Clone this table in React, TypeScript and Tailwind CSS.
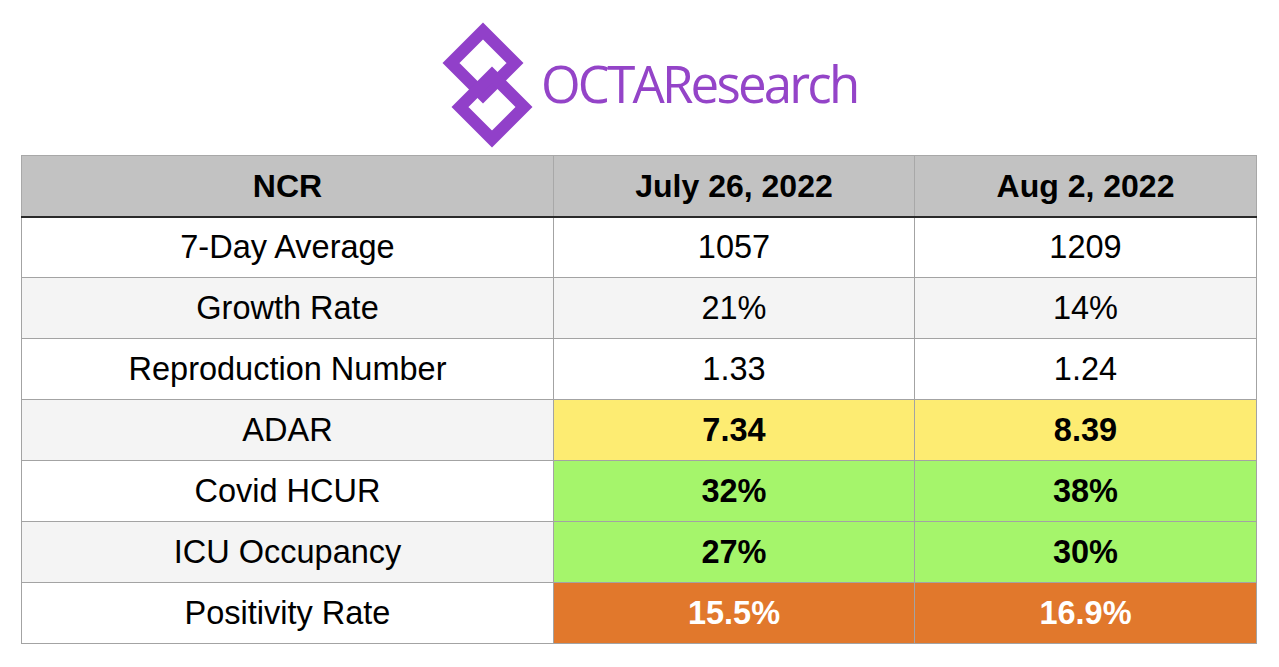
import React from "react";

interface Row {
  label: string;
  jul: string;
  aug: string;
  tone?: "yellow" | "green" | "orange";
}

const rows: Row[] = [
  { label: "7-Day Average", jul: "1057", aug: "1209" },
  { label: "Growth Rate", jul: "21%", aug: "14%" },
  { label: "Reproduction Number", jul: "1.33", aug: "1.24" },
  { label: "ADAR", jul: "7.34", aug: "8.39", tone: "yellow" },
  { label: "Covid HCUR", jul: "32%", aug: "38%", tone: "green" },
  { label: "ICU Occupancy", jul: "27%", aug: "30%", tone: "green" },
  { label: "Positivity Rate", jul: "15.5%", aug: "16.9%", tone: "orange" },
];

const toneClass = (tone?: Row["tone"]): string => {
  switch (tone) {
    case "yellow":
      return "bg-[#fdec72] font-bold text-black";
    case "green":
      return "bg-[#a5f56b] font-bold text-black";
    case "orange":
      return "bg-[#e1782c] font-bold text-white";
    default:
      return "";
  }
};

const Logo: React.FC = () => (
  <div className="flex items-start h-[155px] pl-[438px]">
    <svg
      width="96"
      height="132"
      viewBox="0 0 96 132"
      className="mt-[22px] shrink-0"
    >
      {/* upper diamond */}
      <path
        d="M45 9 L77 41 L45 73 L13 41 Z"
        fill="none"
        stroke="#9140c9"
        strokeWidth="12"
      />
      {/* lower diamond */}
      <path
        d="M54 53 L86 85 L54 117 L22 85 Z"
        fill="none"
        stroke="#9140c9"
        strokeWidth="12"
      />
    </svg>
    <span
      className="ml-[7px] mt-[53px] text-[51px] leading-[60px] font-normal tracking-[-2.8px] text-[#9444c8]"
      style={{ fontFamily: '"Open Sans", sans-serif' }}
    >
      OCTAResearch
    </span>
  </div>
);

const App: React.FC = () => {
  return (
    <div
      className="w-[1279px] h-[667px] bg-white overflow-hidden"
      style={{ fontFamily: '"Liberation Sans", Arial, sans-serif' }}
    >
      <Logo />
      <table className="ml-[21px] border-collapse table-fixed text-[32.5px] text-black">
        <colgroup>
          <col className="w-[532px]" />
          <col className="w-[361px]" />
          <col className="w-[342px]" />
        </colgroup>
        <thead>
          <tr className="h-[61px] bg-[#c2c2c2] text-[32px]">
            <th className="border border-[#a8a8a8] border-b-2 border-b-[#2a2a2a] font-bold">
              NCR
            </th>
            <th className="border border-[#a8a8a8] border-b-2 border-b-[#2a2a2a] font-bold">
              July 26, 2022
            </th>
            <th className="border border-[#a8a8a8] border-b-2 border-b-[#2a2a2a] font-bold">
              Aug 2, 2022
            </th>
          </tr>
        </thead>
        <tbody>
          {rows.map((row, index) => (
            <tr
              key={row.label}
              className={`h-[61px] ${index % 2 === 1 ? "bg-[#f4f4f4]" : "bg-white"}`}
            >
              <td className="border border-[#a3a3a3] text-center">
                {row.label}
              </td>
              <td
                className={`border border-[#a3a3a3] text-center ${toneClass(row.tone)}`}
              >
                {row.jul}
              </td>
              <td
                className={`border border-[#a3a3a3] text-center ${toneClass(row.tone)}`}
              >
                {row.aug}
              </td>
            </tr>
          ))}
        </tbody>
      </table>
    </div>
  );
};

export default App;
